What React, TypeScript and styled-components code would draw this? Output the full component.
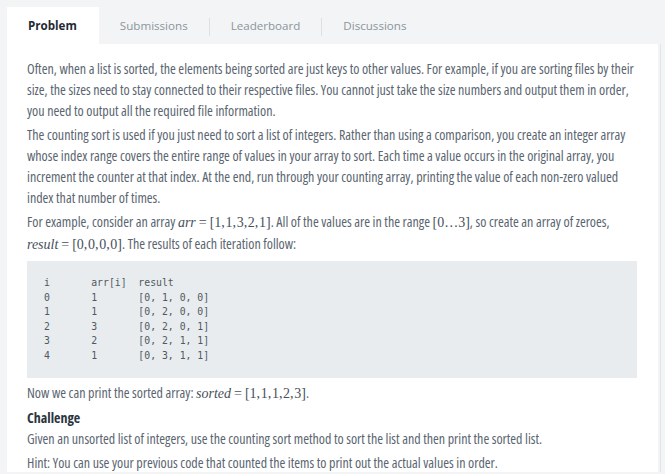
import React from 'react';
import styled, { createGlobalStyle } from 'styled-components';

const GlobalStyle = createGlobalStyle`
  html, body {
    margin: 0;
    padding: 0;
    background: #f2f4f5;
  }
  body {
    font-family: "Open Sans", "DejaVu Sans", sans-serif;
    color: #5a6570;
  }
`;

const Page = styled.div`
  width: 665px;
  height: 474px;
  overflow: hidden;
  padding: 7px 0 0 7px;
  box-sizing: border-box;
  display: flex;
  flex-direction: column;
`;

const TabBar = styled.div`
  display: flex;
  align-items: stretch;
  height: 37px;
  flex: none;
`;

const Tab = styled.div<{ $active?: boolean; $divider?: boolean }>`
  position: relative;
  display: flex;
  align-items: center;
  padding: 0 22px 0 21px;
  font-size: 11.6px;
  font-weight: ${(p) => (p.$active ? 700 : 400)};
  color: ${(p) => (p.$active ? '#1f2a33' : '#8b959e')};
  background: ${(p) => (p.$active ? '#ffffff' : 'transparent')};
  &::after {
    content: '';
    display: ${(p) => (p.$divider ? 'block' : 'none')};
    position: absolute;
    right: 0;
    top: 11px;
    bottom: 8px;
    width: 1px;
    background: #dde1e4;
  }
`;

const Body = styled.div`
  display: flex;
  height: 428px;
  flex: none;
`;

const Panel = styled.div`
  width: 651px;
  background: #ffffff;
  padding: 14px 21px 0 20px;
  box-sizing: border-box;
  overflow: hidden;
`;

const Rail = styled.div`
  width: 1px;
  margin-left: 2px;
  background: #e2e5e8;
`;

const Para = styled.p`
  margin: 0 0 3px;
  font-size: 14px;
  font-stretch: 75%;
  letter-spacing: -0.01px;
  line-height: 21px;
`;

const Heading = styled.h4`
  margin: 0;
  font-size: 14px;
  font-stretch: 75%;
  line-height: 21px;
  font-weight: 700;
  color: #2a3540;
`;

const Math = styled.span`
  font-family: "Liberation Serif", "DejaVu Serif", serif;
  font-size: 14px;
  font-stretch: normal;
  word-spacing: -2.8px;
  color: #46505a;
`;

const Var = styled.i`
  font-style: italic;
`;

const Op = styled.span`
  margin: 0 3px;
`;

const Code = styled.pre`
  margin: 6px 0 4px;
  padding: 15px 17px;
  background: #e8ecef;
  font-family: "DejaVu Sans Mono", monospace;
  font-size: 9.8px;
  line-height: 14.5px;
  color: #4f5961;
`;

const codeText = `i       arr[i]  result
0       1       [0, 1, 0, 0]
1       1       [0, 2, 0, 0]
2       3       [0, 2, 0, 1]
3       2       [0, 2, 1, 1]
4       1       [0, 3, 1, 1]`;

export default function App() {
  return (
    <>
      <GlobalStyle />
      <Page>
        <TabBar>
          <Tab $active>Problem</Tab>
          <Tab $divider>Submissions</Tab>
          <Tab $divider>Leaderboard</Tab>
          <Tab>Discussions</Tab>
        </TabBar>
        <Body>
          <Panel>
            <Para>
              Often, when a list is sorted, the elements being sorted are just keys to other values. For example, if you
              are sorting files by their size, the sizes need to stay connected to their respective files. You cannot
              just take the size numbers and output them in order, you need to output all the required file information.
            </Para>
            <Para>
              The counting sort is used if you just need to sort a list of integers. Rather than using a comparison, you
              create an integer array whose index range covers the entire range of values in your array to sort. Each
              time a value occurs in the original array, you increment the counter at that index. At the end, run through
              your counting array, printing the value of each non-zero valued index that number of times.
            </Para>
            <Para>
              For example, consider an array <Math><Var>arr</Var><Op>=</Op>[1, 1, 3, 2, 1]</Math>. All of the values are
              in the range <Math>[0…3]</Math>, so create an array of zeroes,{' '}
              <Math><Var>result</Var><Op>=</Op>[0, 0, 0, 0]</Math>. The results of each iteration follow:
            </Para>
            <Code>{codeText}</Code>
            <Para>
              Now we can print the sorted array: <Math><Var>sorted</Var><Op>=</Op>[1, 1, 1, 2, 3]</Math>.
            </Para>
            <Heading>Challenge</Heading>
            <Para>
              Given an unsorted list of integers, use the counting sort method to sort the list and then print the sorted
              list.
            </Para>
            <Para>Hint: You can use your previous code that counted the items to print out the actual values in order.</Para>
          </Panel>
          <Rail />
        </Body>
      </Page>
    </>
  );
}
